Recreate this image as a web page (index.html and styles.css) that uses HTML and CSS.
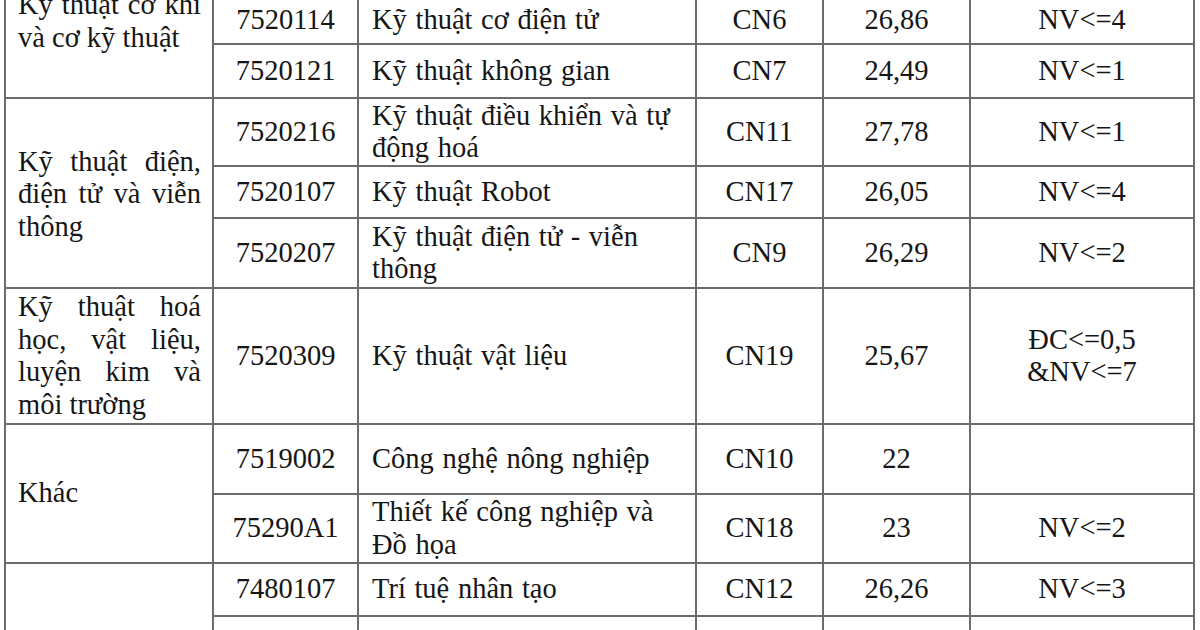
FILE: index.html
```html
<!DOCTYPE html>
<html lang="vi">
<head>
<meta charset="utf-8">
<title>Điểm chuẩn</title>
<link rel="stylesheet" href="styles.css">
</head>
<body>
<table class="grid">
  <colgroup>
    <col class="c-group">
    <col class="c-code">
    <col class="c-name">
    <col class="c-id">
    <col class="c-score">
    <col class="c-cond">
  </colgroup>
  <tbody>
    <tr class="r-a">
      <td class="group g-first" rowspan="2"><div class="lift">Kỹ thuật cơ khí và cơ kỹ thuật</div></td>
      <td class="mid">7520114</td>
      <td class="name">Kỹ thuật cơ điện tử</td>
      <td class="mid">CN6</td>
      <td class="mid">26,86</td>
      <td class="mid">NV&lt;=4</td>
    </tr>
    <tr class="r-b">
      <td class="mid">7520121</td>
      <td class="name">Kỹ thuật không gian</td>
      <td class="mid">CN7</td>
      <td class="mid">24,49</td>
      <td class="mid">NV&lt;=1</td>
    </tr>
    <tr class="r-c">
      <td class="group g-second" rowspan="3">Kỹ thuật điện, điện tử và viễn thông</td>
      <td class="mid">7520216</td>
      <td class="name">Kỹ thuật điều khiển và tự<br>động hoá</td>
      <td class="mid">CN11</td>
      <td class="mid">27,78</td>
      <td class="mid">NV&lt;=1</td>
    </tr>
    <tr class="r-d">
      <td class="mid">7520107</td>
      <td class="name">Kỹ thuật Robot</td>
      <td class="mid">CN17</td>
      <td class="mid">26,05</td>
      <td class="mid">NV&lt;=4</td>
    </tr>
    <tr class="r-e">
      <td class="mid">7520207</td>
      <td class="name">Kỹ thuật điện tử - viễn<br>thông</td>
      <td class="mid">CN9</td>
      <td class="mid">26,29</td>
      <td class="mid">NV&lt;=2</td>
    </tr>
    <tr class="r-f">
      <td class="group">Kỹ thuật hoá học, vật liệu, luyện kim và môi trường</td>
      <td class="mid">7520309</td>
      <td class="name">Kỹ thuật vật liệu</td>
      <td class="mid">CN19</td>
      <td class="mid">25,67</td>
      <td class="mid">ĐC&lt;=0,5<br>&amp;NV&lt;=7</td>
    </tr>
    <tr class="r-g">
      <td class="group" rowspan="2">Khác</td>
      <td class="mid">7519002</td>
      <td class="name">Công nghệ nông nghiệp</td>
      <td class="mid">CN10</td>
      <td class="mid">22</td>
      <td class="mid"></td>
    </tr>
    <tr class="r-h">
      <td class="mid">75290A1</td>
      <td class="name">Thiết kế công nghiệp và<br>Đồ họa</td>
      <td class="mid">CN18</td>
      <td class="mid">23</td>
      <td class="mid">NV&lt;=2</td>
    </tr>
    <tr class="r-i">
      <td class="group" rowspan="2"></td>
      <td class="mid">7480107</td>
      <td class="name">Trí tuệ nhân tạo</td>
      <td class="mid">CN12</td>
      <td class="mid">26,26</td>
      <td class="mid">NV&lt;=3</td>
    </tr>
    <tr class="r-j">
      <td class="mid"></td>
      <td class="name">Hệ thống thông tin</td>
      <td class="mid"></td>
      <td class="mid"></td>
      <td class="mid"></td>
    </tr>
  </tbody>
</table>
</body>
</html>
```

FILE: styles.css
```css
html, body {
  margin: 0;
  padding: 0;
  background: #ffffff;
  overflow: hidden;
}

body {
  font-family: "Liberation Serif", "Times New Roman", serif;
  color: #161616;
}

.grid {
  border-collapse: collapse;
  table-layout: fixed;
  width: 1191px;
  margin: -4px 0 0 4px;
  font-size: 28.5px;
  line-height: 32.5px;
}

.c-group { width: 208px; }
.c-code { width: 145px; }
.c-name { width: 338px; }
.c-id { width: 127px; }
.c-score { width: 147px; }
.c-cond { width: 224px; }

.grid td {
  border: 2px solid #6b6b6b;
  padding: 0 12px;
  vertical-align: middle;
}

.grid td.group {
  text-align: justify;
  padding: 0 11px 0 12px;
}

.grid td.g-first {
  vertical-align: top;
}

.lift {
  margin-top: -9px;
}

.grid td.g-second {
  padding-top: 3px;
}

.grid td.mid {
  text-align: center;
}

.grid td.name {
  text-align: left;
  padding-left: 13px;
  word-spacing: 1.5px;
}

.r-a { height: 47px; }
.r-b { height: 54px; }
.r-c { height: 68px; }
.r-d { height: 52px; }
.r-e { height: 70px; }
.r-f { height: 136px; }
.r-g { height: 70px; }
.r-h { height: 69px; }
.r-i { height: 53px; }
.r-j { height: 54px; }
```
